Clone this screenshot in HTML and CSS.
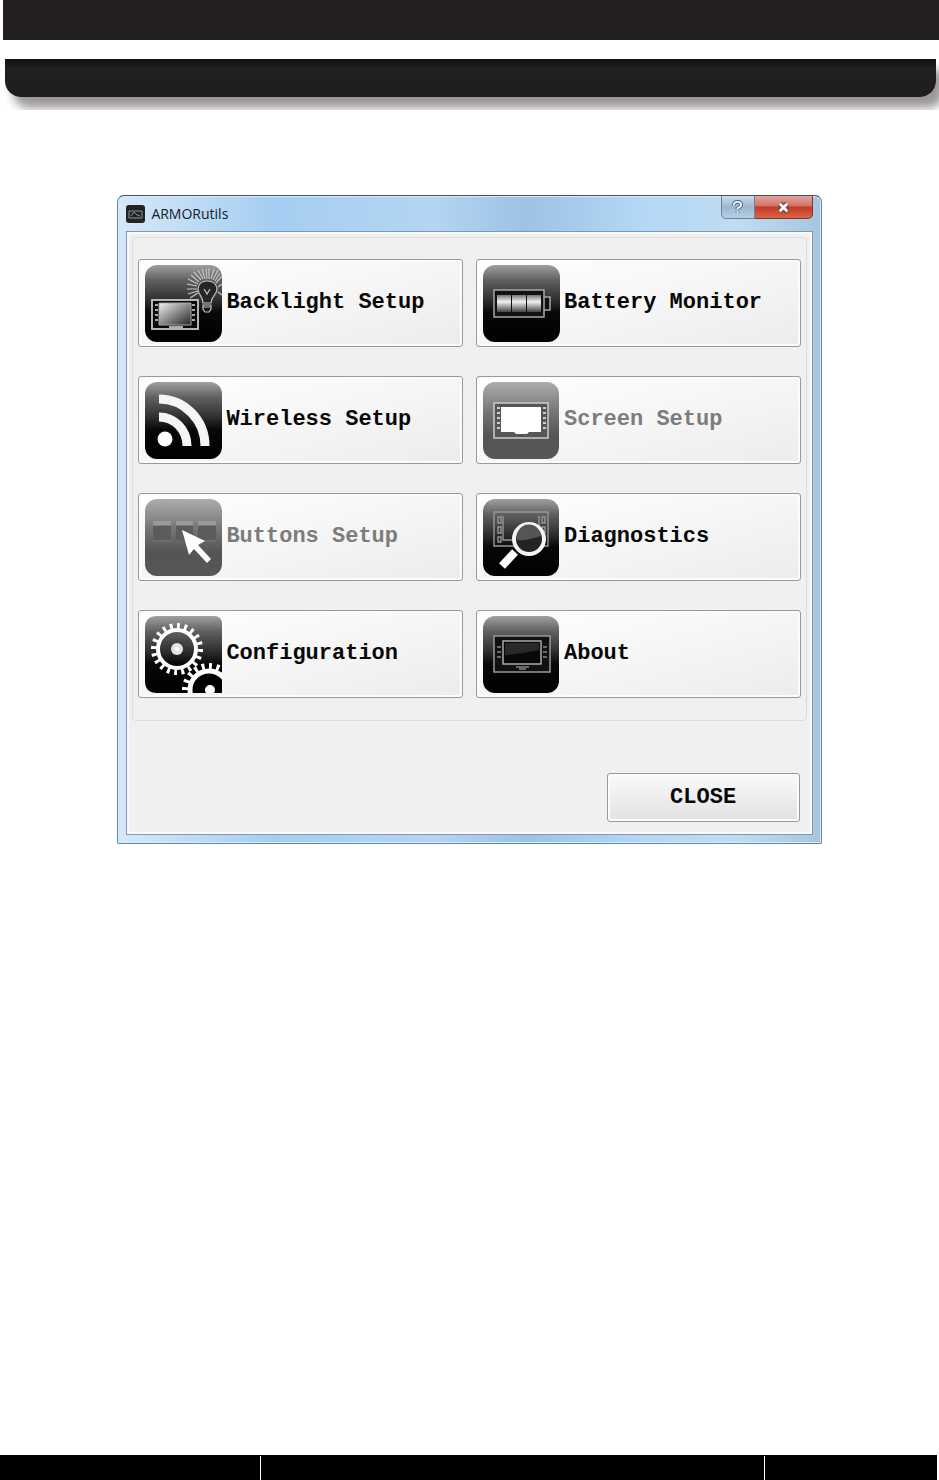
FILE: index.html
```html
<!DOCTYPE html>
<html lang="en">
<head>
<meta charset="utf-8">
<meta name="viewport" content="width=device-width, initial-scale=1">
<title>ARMORutils</title>
<link rel="stylesheet" href="styles.css">
</head>
<body>
<svg class="defs" width="0" height="0" aria-hidden="true">
  <defs>
    <linearGradient id="dark" x1="0" y1="0" x2="0" y2="1">
      <stop offset="0" stop-color="#a0a0a0"/><stop offset=".2" stop-color="#606060"/><stop offset=".45" stop-color="#303030"/><stop offset=".62" stop-color="#080808"/><stop offset="1" stop-color="#000"/>
    </linearGradient>
    <linearGradient id="dim" x1="0" y1="0" x2="0" y2="1">
      <stop offset="0" stop-color="#adadad"/><stop offset=".4" stop-color="#747474"/><stop offset=".7" stop-color="#545454"/><stop offset="1" stop-color="#575757"/>
    </linearGradient>
    <linearGradient id="glass" x1="0" y1="0" x2="1" y2="1">
      <stop offset="0" stop-color="#f2f2f2"/><stop offset="1" stop-color="#222"/>
    </linearGradient>
    <linearGradient id="cell" x1="0" y1="0" x2="0" y2="1">
      <stop offset="0" stop-color="#777"/><stop offset=".4" stop-color="#f0f0f0"/><stop offset="1" stop-color="#444"/>
    </linearGradient>
    <clipPath id="tileclip"><path d="M12 0H69Q77 0 77 8V77H12Q0 77 0 65V12Q0 0 12 0Z"/></clipPath>
  </defs>
</svg>

<header class="masthead">
  <div class="masthead-top"></div>
  <div class="masthead-bar"></div>
</header>

<main class="page">
  <section class="window" aria-labelledby="window-title">
    <div class="titlebar">
      <svg class="app-icon" viewBox="0 0 19 18" aria-hidden="true"><rect width="19" height="18" rx="3" fill="#202225"/><path d="M3 6H16V13H3ZM5 11L8 7L11 10L14 11" fill="none" stroke="#8c9297"/></svg>
      <h1 class="window-title" id="window-title">ARMORutils</h1>
      <div class="controls">
        <button class="help" type="button" aria-label="Help"><svg viewBox="0 0 14 16" aria-hidden="true"><path d="M3 6Q3 2 7 2Q11 2 11 5Q11 7 7 9V10M7 12V14" fill="none" stroke="#52677b" stroke-width="4"/><path d="M3 6Q3 2 7 2Q11 2 11 5Q11 7 7 9V10M7 12V14" fill="none" stroke="#eef5fb" stroke-width="2"/></svg></button>
        <button class="exit" type="button" aria-label="Close window"><svg viewBox="0 0 16 14" aria-hidden="true"><path d="M4 3L12 11M12 3L4 11" stroke="#70433f" stroke-width="6"/><path d="M4 3L12 11M12 3L4 11" stroke="#fff" stroke-width="3"/></svg></button>
      </div>
    </div>
    <div class="client">
      <div class="tiles">
        <button class="tile" type="button">
          <svg class="icon" viewBox="0 0 77 77" aria-hidden="true">
            <rect width="77" height="77" rx="12" fill="url(#dark)"/>
            <g stroke="#c5c5c5" stroke-width="1.2">
              <path d="M53 19L43 14M52 24L42 24M53 28L45 33M56 15L49 7M60 14L57 4M64 14V3M68 15L73 5M71 18L77 11M73 22L77 19M73 27L77 30M54 17L46 10M52 21L42 19M53 26L43 29M58 14L53 5M62 14L61 4M66 14L69 4M70 16L75 8"/>
              <path d="M58 38C58 31 53 30 53 24Q54 16 62 16Q71 16 72 24C72 30 66 31 66 38Z" fill="#252525"/>
              <path d="M58 40H66V44L64 47H60L58 44ZM58 42H66M59 24L62 29L65 24" fill="none"/>
            </g>
            <rect x="7" y="35" width="46" height="29" fill="#090909" stroke="#c8c8c8" stroke-width="1.8"/>
            <path d="M10 40H13M10 45H13M10 50H13M10 55H13M47 40H50M47 45H50M47 50H50M47 55H50M24 62H38" stroke="#aaa" stroke-width="2"/>
            <path d="M14 38H46V60H14Z" fill="url(#glass)" stroke="#aaa"/>
          </svg>
          <span>Backlight Setup</span>
        </button>
        <button class="tile" type="button">
          <svg class="icon" viewBox="0 0 77 77" aria-hidden="true">
            <rect width="77" height="77" rx="12" fill="url(#dark)"/>
            <path d="M11 25H61V32H67V45H61V52H11Z" fill="#111" stroke="#a6a6a6" stroke-width="1.5"/>
            <path d="M61 32V45" stroke="#a6a6a6" stroke-width="1.5"/>
            <path d="M14 30H28V47H14ZM29 30H43V47H29ZM44 30H58V47H44Z" fill="url(#cell)"/>
          </svg>
          <span>Battery Monitor</span>
        </button>
        <button class="tile" type="button">
          <svg class="icon" viewBox="0 0 77 77" aria-hidden="true">
            <rect width="77" height="77" rx="12" fill="url(#dark)"/>
            <circle cx="20" cy="57" r="7.5" fill="#fff"/>
            <path d="M14 35A28 29 0 0 1 42 64M14 17A46 47 0 0 1 60 64" fill="none" stroke="#f5f5f5" stroke-width="9"/>
          </svg>
          <span>Wireless Setup</span>
        </button>
        <button class="tile" type="button" disabled>
          <svg class="icon" viewBox="0 0 77 77" aria-hidden="true">
            <rect width="76" height="77" rx="12" fill="url(#dim)"/>
            <rect x="11" y="21" width="54" height="35" fill="#565656" stroke="#ccc" stroke-width="1.5"/>
            <path d="M14 26H17M14 31H17M14 36H17M14 41H17M14 46H17M60 26H63M60 31H63M60 36H63M60 41H63M60 46H63" stroke="#ccc" stroke-width="2"/>
            <path d="M18 25H58V50H46L44 52H33L31 50H18Z" fill="#fff"/>
          </svg>
          <span>Screen Setup</span>
        </button>
        <button class="tile" type="button" disabled>
          <svg class="icon" viewBox="0 0 77 77" aria-hidden="true">
            <rect width="77" height="77" rx="12" fill="url(#dim)"/>
            <path d="M8 22H26V26H8ZM31 22H48V26H31ZM53 22H71V26H53Z" fill="#999"/>
            <path d="M8 27H26V41H8ZM31 27H48V41H31ZM53 27H71V41H53Z" fill="#5c5c5c"/>
            <path d="M8 42H26M57 42H71" stroke="#777"/>
            <path d="M37 31L60 42L53 46L66 60L62 64L49 50L44 56Z" fill="#fff"/>
          </svg>
          <span>Buttons Setup</span>
        </button>
        <button class="tile" type="button">
          <svg class="icon" viewBox="0 0 77 77" aria-hidden="true">
            <rect width="76" height="77" rx="12" fill="url(#dark)"/>
            <path d="M11 13H65V47H11ZM20 17V41H35M56 17V28M15 18H18V24H15ZM15 28H18V34H15ZM15 38H18V43H15ZM59 18H62V24H59ZM59 28H62V34H59Z" fill="none" stroke="#969696" stroke-width="1.4"/>
            <path d="M32 53L19 67" stroke="#fff" stroke-width="8"/>
            <circle cx="46" cy="40" r="15" fill="#242424" stroke="#f4f4f4" stroke-width="4"/>
            <path d="M34 41Q43 42 58 37A12 12 0 0 0 34 38Z" fill="#555"/>
          </svg>
          <span>Diagnostics</span>
        </button>
        <button class="tile" type="button">
          <svg class="icon" viewBox="0 0 77 77" aria-hidden="true">
            <g clip-path="url(#tileclip)">
              <rect width="77" height="77" fill="url(#dark)"/>
              <g fill="none" stroke="#fff">
                <circle cx="32" cy="33" r="19" stroke-width="4"/>
                <circle cx="32" cy="33" r="23" stroke-width="6" pathLength="60" stroke-dasharray="1.2 1.8"/>
                <circle cx="64" cy="74" r="24" fill="#000" stroke="#000" stroke-width="4"/>
                <circle cx="64" cy="74" r="19" fill="#000" stroke-width="5"/>
                <circle cx="64" cy="74" r="24" stroke-width="6" pathLength="60" stroke-dasharray="1.2 1.8"/>
              </g>
              <circle cx="32" cy="33" r="6" fill="#e3e3e3"/>
              <circle cx="32" cy="33" r="2" fill="#fff"/>
              <circle cx="65" cy="74" r="5" fill="#fff"/>
            </g>
          </svg>
          <span>Configuration</span>
        </button>
        <button class="tile" type="button">
          <svg class="icon" viewBox="0 0 77 77" aria-hidden="true">
            <rect width="76" height="77" rx="12" fill="url(#dark)"/>
            <rect x="11" y="20" width="56" height="36" fill="#111" stroke="#999" stroke-width="1.5"/>
            <path d="M14 31H18M14 36H18M14 41H18M60 31H64M60 36H64M60 41H64M33 51H46M36 53H43" stroke="#888" stroke-width="1.5"/>
            <path d="M20 25H58V48H20Z" fill="#080808" stroke="#aaa" stroke-width="1.5"/>
            <path d="M22 27H56V34Q39 38 22 39Z" fill="#292929"/>
          </svg>
          <span>About</span>
        </button>
      </div>
      <div class="actions"><button class="close" type="button">CLOSE</button></div>
    </div>
  </section>
</main>

<footer class="footer"><div></div><div></div><div></div></footer>
</body>
</html>
```
FILE: styles.css
```css
* { box-sizing: border-box; }
body {
  margin: 0;
  min-height: 100vh;
  display: flex;
  flex-direction: column;
  background: #fff;
  font-family: "Liberation Mono", monospace;
}
.defs { position: absolute; }
.masthead {
  height: 110px;
  margin-left: 3px;
  overflow: hidden;
}
.masthead-top { height: 40px; background: #231f20; }
.masthead-bar {
  height: 38px;
  margin: 19px 3px 0 2px;
  border-radius: 0 0 16px 16px;
  background: linear-gradient(#111, #222021 25%, #1e1c1d);
  box-shadow: 8px 11px 10px #9c9899;
}
.page { flex: 1; padding: 85px 12.5% 48px; }
.window {
  padding: 0 8px 8px;
  border: 1px solid #68859b;
  border-top-color: #46525e;
  border-radius: 7px 7px 2px 2px;
  background: linear-gradient(90deg, #d6e8f8, #a5cef2 22%, #b4d5f3 45%, #9dc2e5 58%, #b4d8f6 75%, #bfdcf2 88%, #a6c6df);
  box-shadow: inset 0 0 0 1px #d9edfb;
}
.titlebar { display: flex; height: 35px; align-items: center; gap: 6px; }
.app-icon { width: 19px; height: 18px; }
.window-title {
  margin: 0;
  flex: 1;
  color: #16202a;
  font: 400 14px/18px "Open Sans", sans-serif;
}
.controls { display: flex; align-self: flex-start; height: 23px; }
.controls button {
  display: grid;
  place-items: center;
  padding: 0;
  border: 1px solid #6d8296;
  border-top: 0;
}
.help { width: 34px; border-radius: 0 0 0 5px; background: linear-gradient(#c8dcec, #9db8ce 50%, #b4d0e6); }
.help svg { width: 13px; height: 15px; }
.controls .exit { width: 58px; border-color: #743b37; border-left: 0; border-radius: 0 0 5px 0; background: linear-gradient(#e2a49b, #d27467 45%, #c23a25 50%, #dc6348); }
.exit svg { width: 15px; height: 13px; }
.client {
  padding: 5px 5px 12px;
  border: 1px solid #8199ac;
  background: #f0f0f0;
  box-shadow: inset 0 0 0 2px #fafafa;
}
.tiles {
  display: grid;
  grid-template-columns: 1fr 1fr;
  gap: 29px 13px;
  padding: 21px 5px 22px;
  border: 1px solid #dcdcdc;
  border-radius: 4px;
}
.tile, .close {
  border: 1px solid #999;
  border-radius: 3px;
  background: linear-gradient(165deg, #fff, #f6f6f6 50%, #ececec);
  box-shadow: inset 0 0 0 2px #fcfcfc;
  color: #080808;
  font: 700 22px/26px "Liberation Mono", monospace;
}
.tile {
  display: flex;
  align-items: center;
  gap: 4px;
  height: 88px;
  padding: 0 6px;
  text-align: left;
  white-space: nowrap;
}
.tile:disabled { color: #7c7c7c; }
.icon { width: 77px; height: 77px; flex: none; }
.actions { display: flex; justify-content: flex-end; padding: 52px 7px 0; }
.close { width: 193px; height: 49px; background: linear-gradient(#fafafa, #eee 50%, #e2e2e2); }
.footer {
  display: grid;
  grid-template-columns: 260fr 504fr 172fr;
  gap: 1px;
  height: 25px;
  margin-right: 2px;
  border-top: 1px solid #000;
  background: #fff;
}
.footer div { background: #000; }
```
